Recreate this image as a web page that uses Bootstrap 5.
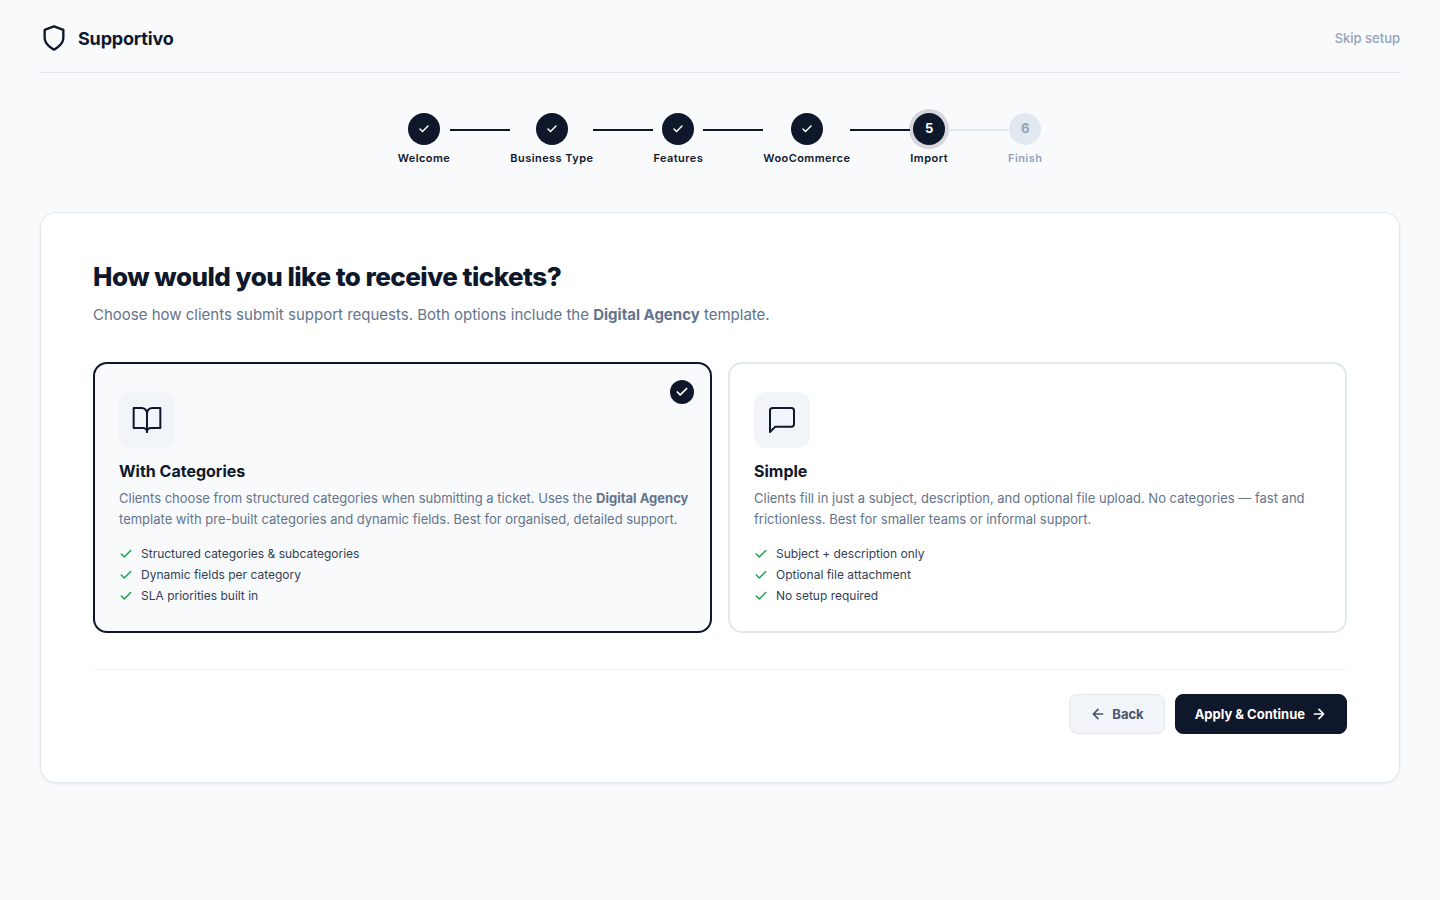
<!DOCTYPE html>
<html lang="en">
<head>
<meta charset="utf-8">
<meta name="viewport" content="width=device-width, initial-scale=1">
<title>Supportivo setup</title>
<link href="https://cdn.jsdelivr.net/npm/bootstrap@5.3.0/dist/css/bootstrap.min.css" rel="stylesheet">
<style>
:root { --ink: #0f172a; --muted: #64748b; --soft: #94a3b8; --line: #e2e8f0; --tint: #f1f5f9; --page: #f8fafc; }
body { font-family: Inter, "Liberation Sans", sans-serif; background: var(--page); color: var(--ink); font-size: 13px; }
svg { fill: none; stroke: currentColor; stroke-width: 2; stroke-linecap: round; stroke-linejoin: round; flex-shrink: 0; }
.page-shell { padding: 0 40px 40px; }
.site-head { padding: 24px 0 20px; border-bottom: 1px solid var(--line); }
.brand-name { font-size: 18px; line-height: 28px; font-weight: 700; letter-spacing: -0.01em; color: var(--ink); gap: 10px; }
.brand-name span { padding-top: 1px; margin-bottom: -1px; }
.skip-link { color: var(--soft); font-weight: 500; line-height: 20px; }
.step-list { padding: 40px 0 46px; margin: 0; list-style: none; }
.step-dot { width: 32px; height: 32px; background: var(--ink); color: #fff; font-weight: 700; }
.step-dot svg, .choice-mark svg { stroke-width: 3; }
.step-now .step-dot { box-shadow: 0 0 0 4px rgba(15, 23, 42, .15); }
.step-text { font-size: 11px; line-height: 16px; font-weight: 600; letter-spacing: .04em; margin-top: 5px; white-space: nowrap; }
.step-next .step-dot { background: var(--line); color: var(--soft); }
.step-next .step-text { color: var(--soft); }
.step-bar { width: 60px; height: 2px; background: var(--ink); margin-top: 16px; }
.step-bar.bar-next { background: var(--line); }
.panel { background: #fff; border: 1px solid var(--line); border-radius: 16px; padding: 48px 52px; box-shadow: 0 1px 3px rgba(15, 23, 42, .06); }
.panel-title { font-size: 26px; line-height: 32px; font-weight: 800; letter-spacing: -0.02em; margin: 0 0 10px; }
.panel-lead { font-size: 15px; line-height: 24px; color: var(--muted); margin: 0 0 35px; }
.choice { border: 2px solid var(--line); border-radius: 14px; padding: 28px 12px 27px 24px; cursor: pointer; display: block; height: 100%; }
.btn-check:checked + .choice { border-color: var(--ink); background: var(--page); }
.choice-mark { width: 24px; height: 24px; top: 16px; right: 16px; background: var(--ink); color: #fff; display: none; }
.btn-check:checked + .choice .choice-mark { display: flex; }
.choice-icon { width: 56px; height: 56px; border-radius: 12px; background: var(--tint); }
.choice-icon svg { stroke-width: 1.5; }
.choice-title { font-size: 16px; line-height: 24px; font-weight: 700; margin-top: 11px; }
.choice-desc { line-height: 21px; color: var(--muted); margin: 5px 0 16px; }
.perk { font-size: 12px; line-height: 16px; color: #334155; }
.perk svg { color: #16a34a; stroke-width: 2.5; }
.perk-list { gap: 5px; }
.panel-foot { margin-top: 36px; padding-top: 24px; border-top: 1px solid var(--tint); gap: 10px; }
.nav-btn { --bs-btn-font-size: 13px; --bs-btn-line-height: 20px; --bs-btn-font-weight: 700; --bs-btn-border-radius: 8px; --bs-btn-padding-y: 9px; --bs-btn-padding-x: 20px; gap: 6px; }
.nav-btn svg { stroke-width: 2.5; }
.btn-prev { --bs-btn-color: #475569; --bs-btn-bg: #f1f5f9; --bs-btn-border-color: #e2e8f0; --bs-btn-hover-bg: #e2e8f0; }
.btn-go { --bs-btn-padding-x: 19px; --bs-btn-color: #fff; --bs-btn-bg: #0f172a; --bs-btn-border-color: #0f172a; --bs-btn-hover-color: #fff; --bs-btn-hover-bg: #1e293b; }
</style>
</head>
<body>
<svg class="d-none" aria-hidden="true">
  <symbol id="tick" viewBox="0 0 24 24"><path d="M20 6 9 17l-5-5"/></symbol>
</svg>
<div class="page-shell">
  <header class="site-head d-flex align-items-center justify-content-between">
    <a href="#" class="d-flex align-items-center text-decoration-none brand-name">
      <svg width="28" height="28" viewBox="0 0 24 24"><path d="M12 22s8-4 8-10V5l-8-3-8 3v7c0 6 8 10 8 10z"/></svg>
      <span>Supportivo</span>
    </a>
    <a href="#" class="skip-link text-decoration-none">Skip setup</a>
  </header>

  <ol class="step-list d-flex justify-content-center align-items-start">
    <li class="d-flex flex-column align-items-center"><span class="step-dot rounded-circle d-flex align-items-center justify-content-center"><svg width="12" height="12"><use href="#tick"/></svg></span><span class="step-text">Welcome</span></li>
    <li class="step-bar" aria-hidden="true"></li>
    <li class="d-flex flex-column align-items-center"><span class="step-dot rounded-circle d-flex align-items-center justify-content-center"><svg width="12" height="12"><use href="#tick"/></svg></span><span class="step-text">Business Type</span></li>
    <li class="step-bar" aria-hidden="true"></li>
    <li class="d-flex flex-column align-items-center"><span class="step-dot rounded-circle d-flex align-items-center justify-content-center"><svg width="12" height="12"><use href="#tick"/></svg></span><span class="step-text">Features</span></li>
    <li class="step-bar" aria-hidden="true"></li>
    <li class="d-flex flex-column align-items-center"><span class="step-dot rounded-circle d-flex align-items-center justify-content-center"><svg width="12" height="12"><use href="#tick"/></svg></span><span class="step-text">WooCommerce</span></li>
    <li class="step-bar" aria-hidden="true"></li>
    <li class="step-now d-flex flex-column align-items-center" aria-current="step"><span class="step-dot rounded-circle d-flex align-items-center justify-content-center">5</span><span class="step-text">Import</span></li>
    <li class="step-bar bar-next" aria-hidden="true"></li>
    <li class="step-next d-flex flex-column align-items-center"><span class="step-dot rounded-circle d-flex align-items-center justify-content-center">6</span><span class="step-text">Finish</span></li>
  </ol>

  <main class="panel">
    <h1 class="panel-title">How would you like to receive tickets?</h1>
    <p class="panel-lead">Choose how clients submit support requests. Both options include the <strong>Digital Agency</strong> template.</p>

    <div class="row g-3">
      <div class="col-md-6">
        <input type="radio" class="btn-check" name="intake" id="intake-categories" checked>
        <label class="choice position-relative" for="intake-categories">
          <span class="choice-mark position-absolute rounded-circle align-items-center justify-content-center"><svg width="14" height="14"><use href="#tick"/></svg></span>
          <span class="choice-icon d-flex align-items-center justify-content-center"><svg width="32" height="32" viewBox="0 0 24 24"><path d="M2 3h6a4 4 0 0 1 4 4v14a3 3 0 0 0-3-3H2z"/><path d="M22 3h-6a4 4 0 0 0-4 4v14a3 3 0 0 1 3-3h7z"/></svg></span>
          <span class="choice-title d-block">With Categories</span>
          <span class="choice-desc d-block">Clients choose from structured categories when submitting a ticket. Uses the <strong>Digital Agency</strong> template with pre-built categories and dynamic fields. Best for organised, detailed support.</span>
          <span class="perk-list d-flex flex-column">
            <span class="perk d-flex align-items-center gap-2"><svg width="14" height="14"><use href="#tick"/></svg>Structured categories &amp; subcategories</span>
            <span class="perk d-flex align-items-center gap-2"><svg width="14" height="14"><use href="#tick"/></svg>Dynamic fields per category</span>
            <span class="perk d-flex align-items-center gap-2"><svg width="14" height="14"><use href="#tick"/></svg>SLA priorities built in</span>
          </span>
        </label>
      </div>
      <div class="col-md-6">
        <input type="radio" class="btn-check" name="intake" id="intake-simple">
        <label class="choice position-relative" for="intake-simple">
          <span class="choice-mark position-absolute rounded-circle align-items-center justify-content-center"><svg width="14" height="14"><use href="#tick"/></svg></span>
          <span class="choice-icon d-flex align-items-center justify-content-center"><svg width="32" height="32" viewBox="0 0 24 24"><path d="M21 15a2 2 0 0 1-2 2H7l-4 4V5a2 2 0 0 1 2-2h14a2 2 0 0 1 2 2z"/></svg></span>
          <span class="choice-title d-block">Simple</span>
          <span class="choice-desc d-block">Clients fill in just a subject, description, and optional file upload. No categories — fast and frictionless. Best for smaller teams or informal support.</span>
          <span class="perk-list d-flex flex-column">
            <span class="perk d-flex align-items-center gap-2"><svg width="14" height="14"><use href="#tick"/></svg>Subject + description only</span>
            <span class="perk d-flex align-items-center gap-2"><svg width="14" height="14"><use href="#tick"/></svg>Optional file attachment</span>
            <span class="perk d-flex align-items-center gap-2"><svg width="14" height="14"><use href="#tick"/></svg>No setup required</span>
          </span>
        </label>
      </div>
    </div>

    <div class="panel-foot d-flex justify-content-end">
      <button type="button" class="btn nav-btn btn-prev d-flex align-items-center"><svg width="16" height="16" viewBox="0 0 24 24"><path d="M19 12H5M12 19l-7-7 7-7"/></svg>Back</button>
      <button type="button" class="btn nav-btn btn-go d-flex align-items-center">Apply &amp; Continue<svg width="16" height="16" viewBox="0 0 24 24"><path d="M5 12h14M12 5l7 7-7 7"/></svg></button>
    </div>
  </main>
</div>
<script src="https://cdn.jsdelivr.net/npm/bootstrap@5.3.0/dist/js/bootstrap.bundle.min.js"></script>
</body>
</html>
